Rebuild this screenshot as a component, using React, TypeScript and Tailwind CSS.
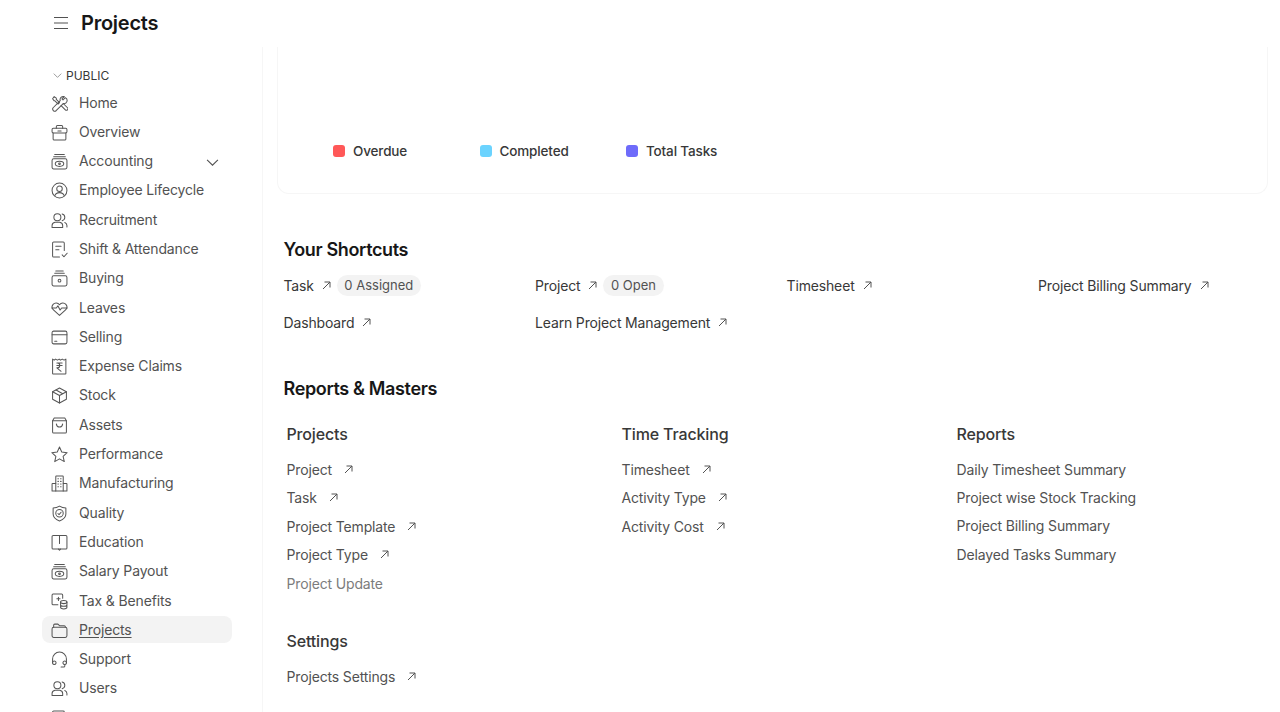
import { ReactNode } from 'react';

const s = { fill: 'none', stroke: '#555555', strokeWidth: 0.95, strokeLinecap: 'round', strokeLinejoin: 'round' } as const;

const icons: Record<string, ReactNode> = {
  tools: <><path d="M3 5.500 1.500 3.500l1.500-2 2 1.500v1.200l3 3-1.300 1.300-3-3z" /><path d="M13.500 2.500 11.300 4.700l-1-1 2.200-2.200a3 3 0 0 0-3.800 3.800L2 12a2 2 0 0 0 2.800 2.800l6.700-6.700a3 3 0 0 0 2-5.600z" /><path d="m9.500 10 4 4a1.400 1.400 0 0 0 2-2l-4-4" /></>,
  briefcase: <><path d="M5 4V2.500a1 1 0 0 1 1-1h4a1 1 0 0 1 1 1V4" /><rect x="1" y="4" width="14" height="4.500" rx="1.200" /><path d="M2 8.500V14a1 1 0 0 0 1 1h10a1 1 0 0 0 1-1V8.500" /><path d="M6.500 6.500h3" /></>,
  money: <><path d="M3.500 1.500h9" /><path d="M2.500 3.500h11" /><rect x="1" y="5.500" width="14" height="9.500" rx="1.500" /><ellipse cx="8" cy="10.200" rx="4" ry="2.400" /><circle cx="8" cy="10.200" r=".8" /></>,
  user: <><circle cx="8" cy="8" r="7" /><circle cx="8" cy="6.300" r="2.600" /><path d="M3.500 13c.7-2 2.400-3 4.500-3s3.800 1 4.500 3" /></>,
  users: <><circle cx="6" cy="5" r="3.300" /><path d="M1 14.500v-1.800c0-1.500 1.300-2.700 2.800-3h4.400c1.500.3 2.800 1.500 2.800 3v1.800z" /><path d="M10.500 1.800a3.300 3.300 0 0 1 0 6.400" /><path d="M13 9.800c1.200.5 2 1.600 2 2.900v1.300" /></>,
  shift: <><path d="M12.500 9V2a1 1 0 0 0-1-1h-9a1 1 0 0 0-1 1v12a1 1 0 0 0 1 1H8" /><path d="M4.500 5h5M4.500 8.300h3" /><path d="m10.500 13 1.700 1.800 3-3.300" /></>,
  buying: <><path d="M4.500 1h7M3.500 3h9" /><rect x="1" y="5.500" width="14" height="9.500" rx="1.500" /><circle cx="8" cy="10" r="1.300" /></>,
  heart: <><path d="M8 14.500 2.300 9.300a3.800 3.800 0 0 1-.3-5.200C3.500 2.300 6.500 2.300 8 4.500c1.500-2.200 4.500-2.200 6-.4a3.800 3.800 0 0 1-.3 5.200z" /><path d="M.8 7.500H5l1.500-2 2 4 1.500-2h5.200" /></>,
  selling: <><rect x="1" y="2" width="14" height="12" rx="1.500" /><path d="M1 5.500h14M3.500 11.500h2" /></>,
  receipt: <><path d="M1.500 1v13.500a.5.5 0 0 0 .5.5h11.500a.5.5 0 0 0 .5-.5V1l-1.700 1-1.700-1-1.700 1L7.700 1 6 2 4.300 1 3 2z" /><path d="M5.500 4.800h5M5.500 7h5M6 4.800c3 0 3 4.400 0 4.400h-.5l4 3.300" /></>,
  box: <><path d="M8 1 1.500 4.500v7L8 15l6.500-3.500v-7z" /><path d="m1.500 4.500 6.500 3.500 6.500-3.500M8 8v7M4.800 2.800 11 6.300" /></>,
  bag: <><path d="M3 1h10l1.500 2.500V14a1 1 0 0 1-1 1h-11a1 1 0 0 1-1-1V3.500z" /><path d="M1.500 3.500h13M5 6.500c.5 4 5.500 4 6 0" /></>,
  star: <path d="m8 1 2.100 4.700 5.100.6-3.800 3.400 1.100 5L8 12.100l-4.500 2.600 1.100-5L.8 6.300l5.100-.6z" />,
  building: <><path d="M4.500 15V1.500A.5.5 0 0 1 5 1h6a.5.5 0 0 1 .5.5V15" /><path d="M4.500 8h-3a.5.5 0 0 0-.5.5V15h14V8.500a.5.5 0 0 0-.5-.5h-3" /><path d="M6.500 3.500H7M9 3.500h.5M6.500 6H7M9 6h.5M6.500 8.500H7M9 8.500h.5M6.500 11H7M9 11h.5" /></>,
  shield: <><path d="M8 1c2 1.200 4 1.700 6 1.800v5.700c0 3-2.500 5.300-6 6.500-3.500-1.200-6-3.500-6-6.500V2.800C4 2.700 6 2.200 8 1z" /><circle cx="8" cy="7.800" r="3.500" /><path d="m6.500 8 1.100 1 1.900-2.200" /></>,
  book: <><path d="M8 14.200H2a1 1 0 0 1-1-1V2.500a1 1 0 0 1 1-1h12a1 1 0 0 1 1 1v10.700a1 1 0 0 1-1 1z" /><path d="M8 1.500V9" /><path d="m7 14.200 1 1 1-1" /></>,
  coins: <><path d="M6.500 11H2a1 1 0 0 1-1-1V2a1 1 0 0 1 1-1h8a1 1 0 0 1 1 1v3" /><path d="M5.500 5.500h3M7 4v3" /><ellipse cx="12" cy="8.500" rx="3" ry="1.500" /><path d="M9 8.500v5c0 .8 1.300 1.500 3 1.500s3-.7 3-1.500v-5M9 11c0 .8 1.300 1.500 3 1.500s3-.7 3-1.500" /></>,
  folder: <><path d="M2.500 5V3a1 1 0 0 1 1-1h3L8 3.500h4.500a1 1 0 0 1 1 1V5" /><rect x="1" y="5" width="14" height="9.500" rx="1.500" /></>,
  headset: <><path d="M1.500 11V7.500a6.500 6.500 0 0 1 13 0V11" /><path d="M1.500 10.500a1.700 1.700 0 0 1 3.200 0v1a1.700 1.700 0 0 1-3.200 0zM14.500 10.500a1.700 1.700 0 0 0-3.200 0v1a1.700 1.700 0 0 0 3.200 0z" /><path d="M13 13.500v.5a1 1 0 0 1-1 1H9.500" /></>,
};

const nav: [string, string][] = [
  ['Home', 'tools'], ['Overview', 'briefcase'], ['Accounting', 'money'], ['Employee Lifecycle', 'user'],
  ['Recruitment', 'users'], ['Shift & Attendance', 'shift'], ['Buying', 'buying'], ['Leaves', 'heart'],
  ['Selling', 'selling'], ['Expense Claims', 'receipt'], ['Stock', 'box'], ['Assets', 'bag'],
  ['Performance', 'star'], ['Manufacturing', 'building'], ['Quality', 'shield'], ['Education', 'book'],
  ['Salary Payout', 'money'], ['Tax & Benefits', 'coins'], ['Projects', 'folder'], ['Support', 'headset'],
  ['Users', 'users'], ['Healthcare', 'shift'],
];

function NavIcon({ name }: { name: string }) {
  return <svg width="17" height="17" viewBox="0 0 16 16" className="mt-[2px] shrink-0" {...s}>{icons[name]}</svg>;
}

function Arrow() {
  return (
    <svg width="9" height="9" viewBox="0 0 9 9" fill="none" stroke="#525252" strokeWidth="1" className="shrink-0">
      <path d="M1 8 8 1M2.500 1H8v5.500" />
    </svg>
  );
}

function Chevron({ size, color }: { size: number; color: string }) {
  return (
    <svg width={size} height={size} viewBox="0 0 12 12" fill="none" stroke={color} strokeWidth="1">
      <path d="m1 3.500 5 5 5-5" />
    </svg>
  );
}

function Legend({ color, label }: { color: string; label: string }) {
  return (
    <div className="flex w-[146.500px] items-center gap-[8px]">
      <span className={`size-3 rounded-[3px] ${color}`} />
      <span className="text-[13.500px] font-medium tracking-[-0.15px] text-[#383838]">{label}</span>
    </div>
  );
}

function Shortcut({ label, badge }: { label: string; badge?: string }) {
  return (
    <div className="flex h-[20px] items-center">
      <span className="flex items-center gap-[8px] text-[#383838]">{label}<Arrow /></span>
      {badge && <span className="ml-[6px] rounded-full bg-[#f3f3f3] px-[7.500px] py-[1px] text-[13px] tracking-normal text-[#525252]">{badge}</span>}
    </div>
  );
}

function LinkColumn({ title, links, muted = [] }: { title: string; links: string[]; muted?: string[] }) {
  return (
    <div>
      <h3 className="mb-[14px] h-[24px] text-[16px] leading-[24px] font-medium tracking-[-0.15px] text-[#383838]">{title}</h3>
      <div className="flex flex-col gap-[8.400px]">
        {links.map((l) => (
          <div key={l} className={`flex h-[20px] items-center gap-[12px] ${muted.includes(l) ? 'text-[#7c7c7c]' : 'text-[#525252]'}`}>
            {l}
            {!muted.includes(l) && <Arrow />}
          </div>
        ))}
      </div>
    </div>
  );
}

export default function App() {
  return (
    <div className="h-[712px] w-[1280px] overflow-hidden bg-white text-[14px] tracking-[-0.15px] text-[#383838] [font-family:Inter,sans-serif]">
      <header className="flex h-[47px] items-center pb-[1px] pl-[54px]">
        <svg width="14" height="14" viewBox="0 0 14 14" fill="none" stroke="#525252" strokeWidth="1.200">
          <path d="M0 1.500h14M0 7h14M0 12.500h14" />
        </svg>
        <h1 className="ml-[13px] text-[20px] font-semibold tracking-[-0.25px] text-[#171717]">Projects</h1>
      </header>

      <div className="flex h-[665px]">
        <aside className="h-full w-[263px] shrink-0 overflow-hidden border-r border-[#f6f6f6] pt-[21px] pl-[42px]">
          <div className="mb-[5.500px] flex h-[15px] items-center gap-[4px] pl-[11px] text-[12px] tracking-normal text-[#383838]">
            <Chevron size={9} color="#7c7c7c" />
            PUBLIC
          </div>
          {nav.map(([label, icon]) => {
            const active = label === 'Projects';
            return (
              <div key={label} className={`mb-[2.300px] flex h-[27px] w-[190px] items-center gap-[10px] rounded-lg pl-[9px] ${active ? 'bg-[#f3f3f3]' : ''}`}>
                <NavIcon name={icon} />
                <span className={`ml-[1px] text-[#525252] ${active ? 'underline underline-offset-2' : ''}`}>{label}</span>
                {label === 'Accounting' && <span className="mt-[3px] ml-auto pr-[13px]"><Chevron size={13} color="#525252" /></span>}
              </div>
            );
          })}
        </aside>

        <main className="min-w-0 flex-1">
          <div className="ml-[14px] flex h-[147px] w-[991px] items-end rounded-b-xl border border-t-0 border-[#f6f6f6] pb-[32px] pl-[55px]">
            <Legend color="bg-[#ff5858]" label="Overdue" />
            <Legend color="bg-[#6bd3fe]" label="Completed" />
            <Legend color="bg-[#6e6bfa]" label="Total Tasks" />
          </div>

          <section className="pl-[20.500px]">
            <h2 className="mt-[44px] h-[24px] text-[18px] leading-[24px] font-semibold tracking-[-0.36px] text-[#171717]">Your Shortcuts</h2>
            <div className="mt-[13.500px] grid w-[1006px] grid-cols-4 gap-y-[16.500px]">
              <Shortcut label="Task" badge="0 Assigned" />
              <Shortcut label="Project" badge="0 Open" />
              <Shortcut label="Timesheet" />
              <Shortcut label="Project Billing Summary" />
              <Shortcut label="Dashboard" />
              <Shortcut label="Learn Project Management" />
            </div>

            <h2 className="mt-[44.500px] h-[24px] text-[18px] leading-[24px] font-semibold tracking-[-0.36px] text-[#171717]">Reports &amp; Masters</h2>
            <div className="mt-[21px] grid w-[1008px] grid-cols-3 pl-[3px]">
              <div>
                <LinkColumn title="Projects" links={['Project', 'Task', 'Project Template', 'Project Type', 'Project Update']} muted={['Project Update']} />
                <div className="mt-[35.500px]"><LinkColumn title="Settings" links={['Projects Settings']} /></div>
              </div>
              <LinkColumn title="Time Tracking" links={['Timesheet', 'Activity Type', 'Activity Cost']} />
              <div>
                <h3 className="mb-[14px] h-[24px] text-[16px] leading-[24px] font-medium tracking-[-0.15px] text-[#383838]">Reports</h3>
                <div className="flex flex-col gap-[8.400px] text-[#525252]">
                  {['Daily Timesheet Summary', 'Project wise Stock Tracking', 'Project Billing Summary', 'Delayed Tasks Summary'].map((l) => (
                    <div key={l} className="h-[20px] leading-[20px]">{l}</div>
                  ))}
                </div>
              </div>
            </div>
          </section>
        </main>
      </div>
    </div>
  );
}
